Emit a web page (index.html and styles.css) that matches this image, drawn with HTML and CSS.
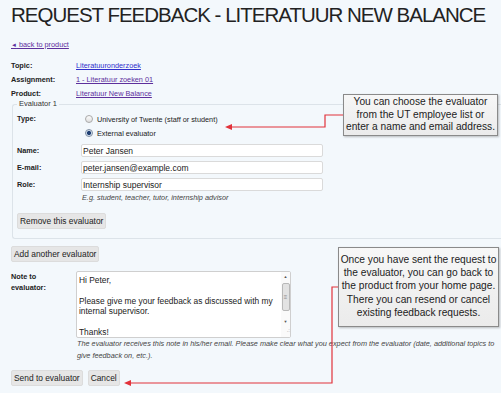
FILE: index.html
```html
<!DOCTYPE html>
<html lang="en">
<head>
  <meta charset="UTF-8" />
  <title>Request feedback</title>
  <link rel="stylesheet" href="styles.css">
</head>
<body>
  <div class="page">
    <h1>REQUEST FEEDBACK - LITERATUUR NEW BALANCE</h1>
    <a class="back" href="#"><span class="tri">&#9668;</span> back to product</a>

    <div class="info">
      <div class="row"><span class="lbl">Topic:</span><a class="fresh" href="#">Literatuuronderzoek</a></div>
      <div class="row"><span class="lbl">Assignment:</span><a href="#">1 - Literatuur zoeken 01</a></div>
      <div class="row"><span class="lbl">Product:</span><a href="#">Literatuur New Balance</a></div>
    </div>

    <fieldset class="evaluator">
      <legend>Evaluator 1</legend>
      <div class="row type">
        <span class="lbl">Type:</span>
        <div class="radios">
          <label class="radio"><input type="radio" name="kind"> University of Twente (staff or student)</label>
          <label class="radio"><input type="radio" name="kind" checked> External evaluator</label>
        </div>
      </div>
      <div class="fields">
        <div class="row field"><span class="lbl">Name:</span><input type="text" value="Peter Jansen"></div>
        <div class="row field"><span class="lbl">E-mail:</span><input type="text" value="peter.jansen@example.com"></div>
        <div class="row field"><span class="lbl">Role:</span><input type="text" value="Internship supervisor"></div>
        <div class="row"><span></span><p class="hint">E.g. student, teacher, tutor, internship advisor</p></div>
      </div>
      <button class="btn remove">Remove this evaluator</button>
    </fieldset>

    <button class="btn add">Add another evaluator</button>

    <div class="row note">
      <span class="lbl">Note to<br>evaluator:</span>
      <div class="note-box">
        <textarea>Hi Peter,

Please give me your feedback as discussed with my internal supervisor.

Thanks!</textarea>
        <div class="scrollbar">
          <span class="sb-up">&#9650;</span>
          <span class="sb-thumb">&#8801;</span>
          <span class="sb-fill"></span>
          <span class="sb-down">&#9660;</span>
          <span class="sb-grip">.:</span>
        </div>
      </div>
    </div>
    <div class="row"><span></span><p class="hint note-hint">The evaluator receives this note in his/her email. Please make clear what you expect from the evaluator (date, additional topics to give feedback on, etc.).</p></div>

    <div class="actions">
      <button class="btn">Send to evaluator</button>
      <button class="btn">Cancel</button>
    </div>
  </div>

  <div class="callout c1">You can choose the evaluator<br>from the UT employee list or<br>enter a name and email address.</div>
  <div class="callout c2">Once you have sent the request to<br>the evaluator, you can go back to<br>the product from your home page.<br>There you can resend or cancel<br>existing feedback requests.</div>

  <svg class="arrows" width="501" height="393" viewBox="0 0 501 393">
    <polyline points="343,115 325,115 325,127 230,127" fill="none" stroke="#e2323b" stroke-width="1.2"/>
    <polygon points="225,127 232,124 232,130" fill="#e2323b"/>
    <polyline points="338,287 332,287 332,383 129,383" fill="none" stroke="#e2323b" stroke-width="1.2"/>
    <polygon points="124,383 131,380 131,386" fill="#e2323b"/>
  </svg>
</body>
</html>
```

FILE: styles.css
```css
* { box-sizing: border-box; }
html, body { margin: 0; }
body { position: relative; width: 501px; height: 393px; overflow: hidden; background: #f3f8fc; font-family: "Liberation Sans", Arial, sans-serif; font-size: 7.3px; color: #222; }
.page { width: 501px; padding: 2px 0 0 11px; }
h1 { margin: 0; font-size: 20.5px; line-height: 26px; font-weight: normal; letter-spacing: -1px; color: #222; white-space: nowrap; }
a { color: #5d2f9c; }
a.fresh { color: #2f2fcc; }
.back { display: block; width: max-content; margin-top: 10px; line-height: 14px; }
.back .tri { font-size: 6px; vertical-align: 0; }
.row { display: grid; grid-template-columns: 65px 1fr; align-items: center; }
.lbl { font-weight: bold; }
.info { margin-top: 6px; }
.info .row { height: 14px; }

fieldset { width: 489px; margin: 0 0 0 1px; padding: 4px 4px 9px 4px; border: 1px solid #dce3e9; border-right: none; border-radius: 3px 0 0 3px; }
legend { padding: 0 2px; font-size: 7.5px; line-height: 8px; color: #333; }
fieldset .row { grid-template-columns: 64px 1fr; }
.type { align-items: start; }
.type .lbl { line-height: 14px; }
.radio { display: flex; align-items: center; height: 14px; padding-left: 4px; gap: 4px; }
.radio input { appearance: none; margin: 0; width: 8px; height: 8px; border: 1px solid #a9a9a9; border-radius: 50%; background: linear-gradient(#fdfdfd, #dedede); }
.radio input:checked { background: radial-gradient(circle, #1f3f73 0 1.8px, #c9d9ea 2.3px, #f0f4f8 100%); border-color: #7f8fa3; }
.fields { margin-top: 2px; }
.field { height: 17px; }
.field input { width: 242px; height: 13px; margin: 0; padding: 0 1px; border: 1px solid #dadada; border-radius: 2px; background: #fff; font-family: inherit; font-size: 8.5px; color: #222; }
.hint { margin: 0; font-style: italic; color: #444; line-height: 10px; padding-left: 1px; }

.btn { display: block; height: 16px; margin: 0; padding: 0 2px; border: 1px solid #dcdcdc; border-radius: 2px; background: #e6e6e6; font-family: inherit; font-size: 8.4px; color: #222; }
.remove { margin-top: 10px; }
.add { margin-top: 7px; }

.note { margin-top: 9px; align-items: start; }
.note .lbl { line-height: 11px; }
.note-box { display: flex; width: 215px; height: 67px; border: 1px solid #cfcfcf; border-radius: 2px; background: #fff; }
.note-box textarea { flex: 1; border: none; resize: none; overflow: hidden; padding: 3px 2px; background: transparent; font-family: inherit; font-size: 8.4px; line-height: 10.4px; color: #222; }
.scrollbar { display: flex; flex-direction: column; align-items: center; width: 9px; background: #fafafa; color: #555; }
.sb-up, .sb-down { height: 10px; font-size: 4px; line-height: 10px; }
.sb-thumb { width: 8px; height: 28px; margin-top: 1px; border: 1px solid #b8b8b8; border-radius: 2px; background: #e2e2e2; font-size: 6px; line-height: 26px; text-align: center; color: #888; }
.sb-fill { flex: 1; }
.sb-grip { height: 10px; font-size: 6px; color: #999; align-self: flex-end; }
.note-hint { width: 420px; line-height: 12px; }

.actions { display: flex; gap: 5px; margin-top: 8px; }

.callout { position: absolute; display: flex; flex-direction: column; justify-content: center; border: 1px solid #8a8a8a; background: linear-gradient(#f7f7f7, #ebebeb); box-shadow: 1px 1px 2px rgba(0,0,0,0.25); font-size: 10.2px; text-align: center; white-space: nowrap; color: #222; }
.c1 { left: 343px; top: 94px; width: 155px; height: 42px; line-height: 12.5px; }
.c2 { left: 338px; top: 247px; width: 161px; height: 80px; line-height: 13.2px; padding-bottom: 2px; }
.arrows { position: absolute; left: 0; top: 0; pointer-events: none; }
```
